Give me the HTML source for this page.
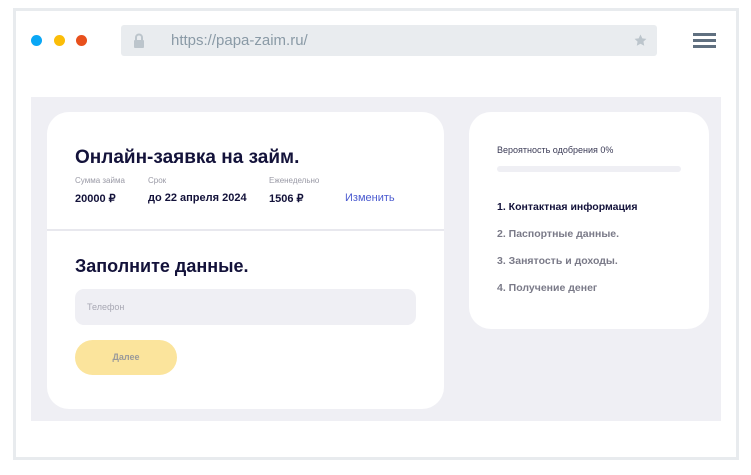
<!DOCTYPE html>
<html><head><meta charset="utf-8"><style>
*{margin:0;padding:0;box-sizing:border-box}
body{width:751px;height:475px;background:#fff;font-family:"Liberation Sans","Noto Sans CJK SC",sans-serif;position:relative;overflow:hidden}
.frame{position:absolute;left:13px;top:8px;width:726px;height:452px;border:3px solid #e8ebee}
.dot{position:absolute;top:35px;width:11px;height:11px;border-radius:50%}
.url{position:absolute;left:121px;top:25px;width:536px;height:31px;background:#e9ecef;border-radius:3px}
.url span{position:absolute;left:50px;top:7px;font-size:15px;color:#8a9aa6}
.gray{position:absolute;left:31px;top:97px;width:690px;height:324px;background:#efeff4}
.card{position:absolute;background:#fff;border-radius:22px}
.b{font-weight:bold;color:#13123a}
.s{position:absolute;font-size:8px;color:#9a9aa6}
.v{position:absolute;font-size:11px;font-weight:bold;color:#13123a}
.st{position:absolute;left:28px;font-size:10.5px;font-weight:bold;color:#7a7a88}
</style></head><body>
<div class="frame"></div>
<div class="dot" style="left:31px;background:#0aa7f5"></div>
<div class="dot" style="left:54px;background:#fbbd08"></div>
<div class="dot" style="left:76px;background:#e8501c"></div>
<div class="url">
<svg style="position:absolute;left:12px;top:8px" width="12" height="15" viewBox="0 0 12 15"><path d="M3 7V4.5a3 3 0 0 1 6 0V7" stroke="#bcc5cc" stroke-width="2" fill="none"/><rect x="1" y="7" width="10" height="8" rx="1" fill="#bcc5cc"/></svg>
<span>https://papa-zaim.ru/</span>
<svg style="position:absolute;left:513px;top:9px" width="13" height="13" viewBox="0 0 24 24"><path d="M12 1l3.4 7 7.6.9-5.6 5.2 1.5 7.6L12 18l-6.9 3.7 1.5-7.6L1 8.9 8.6 8z" fill="#bcc5cc"/></svg>
</div>
<div style="position:absolute;left:693px;top:33px;width:23px;height:3px;background:#607080;box-shadow:0 6px 0 #607080,0 12px 0 #607080"></div>
<div class="gray"></div>
<div class="card" style="left:47px;top:112px;width:397px;height:297px">
<div class="b" style="position:absolute;left:28px;top:35px;font-size:19px">Онлайн-заявка на займ.</div>
<div class="s" style="left:28px;top:64px">Сумма займа</div>
<div class="s" style="left:101px;top:64px">Срок</div>
<div class="s" style="left:222px;top:64px">Еженедельно</div>
<div class="v" style="left:28px;top:80px">20000 ₽</div>
<div class="v" style="left:101px;top:80px">до 22 апреля 2024</div>
<div class="v" style="left:222px;top:80px">1506 ₽</div>
<div style="position:absolute;left:298px;top:80px;font-size:11px;color:#4a5ad0">Изменить</div>
<div style="position:absolute;left:0;top:117px;width:397px;height:2px;background:#e8e8ee"></div>
<div class="b" style="position:absolute;left:28px;top:144px;font-size:18px">Заполните данные.</div>
<div style="position:absolute;left:28px;top:177px;width:341px;height:36px;background:#efeff4;border-radius:9px;font-size:9px;color:#a8a8b4;padding:13px 12px">Телефон</div>
<div style="position:absolute;left:28px;top:228px;width:102px;height:35px;background:#fbe49c;border-radius:18px;font-size:9px;font-weight:bold;color:#9a9a9a;text-align:center;line-height:35px">Далее</div>
</div>
<div class="card" style="left:469px;top:112px;width:240px;height:217px">
<div style="position:absolute;left:28px;top:33px;font-size:9px;color:#3a3a55">Вероятность одобрения 0%</div>
<div style="position:absolute;left:28px;top:54px;width:184px;height:6px;background:#efeff4;border-radius:3px"></div>
<div class="st" style="top:89px;color:#13123a">1. Контактная информация</div>
<div class="st" style="top:116px">2. Паспортные данные.</div>
<div class="st" style="top:143px">3. Занятость и доходы.</div>
<div class="st" style="top:170px">4. Получение денег</div>
</div>
</body></html>
